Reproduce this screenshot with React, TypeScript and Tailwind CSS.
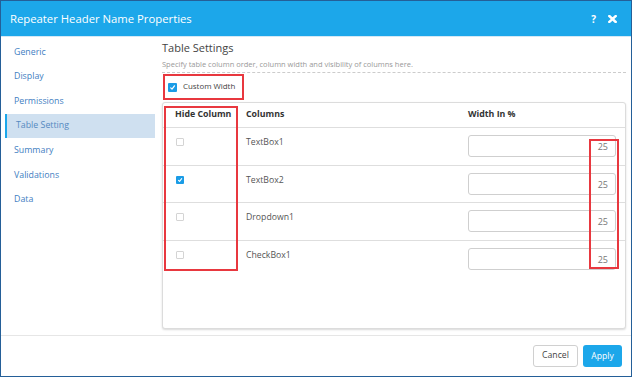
import React from 'react';

const NAV = ['Generic', 'Display', 'Permissions', 'Table Setting', 'Summary', 'Validations', 'Data'];

const ROWS = [
  { name: 'TextBox1', hidden: false },
  { name: 'TextBox2', hidden: true },
  { name: 'Dropdown1', hidden: false },
  { name: 'CheckBox1', hidden: false },
];

function Check({ on, size = 8 }: { on: boolean; size?: number }) {
  if (!on) {
    return <span className="block rounded-[1px] border border-[#d4d4d4] bg-white" style={{ width: size, height: size }} />;
  }
  return (
    <span className="flex items-center justify-center rounded-[1px] bg-[#1a9ce6]" style={{ width: size, height: size }}>
      <svg width={size - 2} height={size - 2} viewBox="0 0 10 10">
        <path d="M2.5 5.5 L4.3 7.3 L7.8 2.6" fill="none" stroke="white" strokeWidth="1.8" strokeLinecap="round" strokeLinejoin="round" />
      </svg>
    </span>
  );
}

export default function App() {
  return (
    <div className="w-[632px] h-[377px] border border-[#245f98] bg-white flex flex-col overflow-hidden font-['Open_Sans',sans-serif]">
      {/* title bar */}
      <div className="h-[35px] bg-[#1ca7ea] flex items-center justify-between pl-[9px] pr-[14px] shrink-0">
        <span className="text-white text-[11.3px] leading-none">Repeater Header Name Properties</span>
        <div className="flex items-center gap-[12px]">
          <span className="text-white text-[10px] font-bold leading-none">?</span>
          <svg width="9" height="8" viewBox="0 0 9 8">
            <path d="M1.3 1 L7.7 7 M7.7 1 L1.3 7" stroke="white" strokeWidth="2.4" strokeLinecap="square" />
          </svg>
        </div>
      </div>
      <div className="h-px bg-[#d3e8f6] shrink-0" />

      <div className="flex-1 flex min-h-0">
        {/* side nav */}
        <div className="w-[154px] shrink-0 pt-[3px]">
          {NAV.map(item =>
            item === 'Table Setting' ? (
              <div key={item} className="h-[24.6px] ml-[4px] flex items-center bg-[#cfe0f0] border-l-2 border-[#1ca7ea] pl-[9px] text-[8.8px] text-[#5589c0]">
                {item}
              </div>
            ) : (
              <div key={item} className="h-[24.6px] flex items-center pl-[13px] text-[8.8px] text-[#3f80c2]">
                {item}
              </div>
            )
          )}
        </div>

        {/* content */}
        <div className="flex-1 pl-[7px] pr-[5px] flex flex-col">
          <div className="mt-[3px] text-[11px] leading-[16px] text-[#444]">Table Settings</div>
          <div className="mt-[3px] text-[7.5px] leading-[10px] text-[#999] pb-[3px] border-b border-dashed border-[#ccc]">
            Specify table column order, column width and visibility of columns here.
          </div>

          <div className="mt-[1px] ml-[1px] w-[81px] h-[26px] border-2 border-[#e8383f] flex items-center pl-[3px] gap-[6px]">
            <Check on size={9} />
            <span className="text-[7.9px] text-[#444]">Custom Width</span>
          </div>

          <div className="relative mt-[2px] h-[227px] border border-[#dcdcdc] rounded-[3px] shadow-[0_1px_2px_rgba(0,0,0,0.15)] bg-white">
            <div className="grid grid-cols-[75px_222px_1fr] h-[25px] border-b border-[#dedede] items-center text-[8.8px] font-bold text-[#333]">
              <span className="pl-[12px]">Hide Column</span>
              <span className="pl-[8px]">Columns</span>
              <span className="pl-[8px]">Width In %</span>
            </div>
            {ROWS.map((r, i) => (
              <div
                key={r.name}
                className={`grid grid-cols-[75px_222px_1fr] h-[37.5px] ${i < ROWS.length - 1 ? 'border-b border-[#dedede]' : ''}`}
              >
                <div className="pl-[13px] pt-[10px]">
                  <Check on={r.hidden} />
                </div>
                <div className="pl-[8px] pt-[7px] text-[8.7px] leading-[14px] text-[#555]">{r.name}</div>
                <div className="pl-[8px] pr-[9px] pt-[7px]">
                  <div className="h-[22px] border border-[#cfcfcf] rounded-[3px] flex items-center justify-end pr-[7px] pt-[2px] text-[9px] text-[#777]">
                    25
                  </div>
                </div>
              </div>
            ))}

            {/* annotation boxes */}
            <div className="absolute left-[1px] top-[3px] w-[74px] h-[165px] border-2 border-[#e8383f]" />
            <div className="absolute left-[426px] top-[36px] w-[30px] h-[130px] border-2 border-[#e8383f]" />
          </div>
        </div>
      </div>

      {/* footer */}
      <div className="h-[41px] shrink-0 border-t border-[#e6e6e6] flex items-center justify-end gap-[5px] pr-[9px]">
        <button className="w-[45px] h-[22px] border border-[#d0d0d0] rounded-[3px] bg-white text-[8.7px] text-[#444]">Cancel</button>
        <button className="w-[39px] h-[22px] rounded-[3px] bg-[#1ca7ea] text-[8.6px] text-white">Apply</button>
      </div>
    </div>
  );
}
